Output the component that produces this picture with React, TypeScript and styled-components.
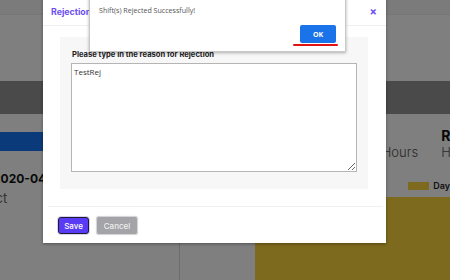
import React from 'react';
import styled, { createGlobalStyle } from 'styled-components';

const GlobalStyle = createGlobalStyle`
  html, body {
    margin: 0;
    padding: 0;
    width: 450px;
    height: 280px;
    overflow: hidden;
    background: #ffffff;
  }
`;

const Page = styled.div`
  position: relative;
  width: 450px;
  height: 280px;
  overflow: hidden;
  font-family: 'Inter', 'Liberation Sans', sans-serif;
  background: #ffffff;
`;

const TopBar = styled.div`
  height: 14px;
  background: #f6f6f6;
  border-bottom: 1px solid #ececec;
`;

const Hero = styled.div`
  height: 66px;
  background: #ffffff;
`;

const NavBar = styled.div`
  height: 33px;
  background: #949494;
`;

const Content = styled.div`
  display: grid;
  grid-template-columns: 180px 1fr;
  height: 166px;
`;

const LeftCol = styled.div`
  border-right: 1px solid #d8d8d8;
  padding-top: 18px;
  overflow: hidden;
`;

const BlueStrip = styled.div`
  height: 19px;
  background: #1474f2;
`;

const DateText = styled.div`
  margin: 20px 0 0 -7px;
  font-size: 12px;
  font-weight: 700;
  color: #111;
  white-space: nowrap;
`;

const SubText = styled.div`
  margin: 4px 0 0 -36px;
  font-size: 13px;
  color: #666;
  white-space: nowrap;
`;

const RightCol = styled.div`
  display: flex;
  flex-direction: column;
  overflow: hidden;
`;

const StatRow = styled.div`
  display: flex;
  gap: 23px;
  padding: 14px 0 0 169px;
`;

const Stat = styled.div`
  display: flex;
  flex-direction: column;
  white-space: nowrap;
`;

const StatTitle = styled.div`
  font-size: 14px;
  font-weight: 700;
  color: #111;
  line-height: 16px;
`;

const StatLabel = styled.div`
  font-size: 13px;
  font-weight: 300;
  color: #555;
  line-height: 16px;
`;

const Legend = styled.div`
  display: flex;
  align-items: center;
  gap: 4px;
  padding: 20px 0 0 228px;
  font-size: 9px;
  font-weight: 600;
  color: #222;
`;

const LegendSwatch = styled.span`
  width: 23px;
  height: 8px;
  background: #fcd43c;
`;

const Chart = styled.div`
  flex: 1;
  margin: 6px 0 0 75px;
  background: #fcd43c;
`;

const Overlay = styled.div`
  position: absolute;
  inset: 0;
  background: rgba(0, 0, 0, 0.5);
`;

const Modal = styled.div`
  position: absolute;
  left: 43px;
  top: -2px;
  width: 343px;
  height: 245px;
  background: #ffffff;
  box-shadow: 0 1px 3px rgba(0, 0, 0, 0.35);
  display: flex;
  flex-direction: column;
  font-family: 'Inter', 'Liberation Sans', sans-serif;
`;

const ModalHeader = styled.div`
  height: 27px;
  flex-shrink: 0;
  display: flex;
  align-items: center;
  justify-content: space-between;
  padding: 0 9px 0 8px;
  border-bottom: 1px solid #f0f0f0;
  color: #6b4df2;
`;

const ModalTitle = styled.span`
  font-size: 8.8px;
  font-weight: 700;
`;

const CloseX = styled.span`
  font-size: 11px;
  font-weight: 700;
  line-height: 1;
`;

const ModalBody = styled.div`
  padding: 11px 18px 17px 17px;
`;

const Panel = styled.div`
  background: #f7f7f7;
  padding: 13px 11px 17px 11px;
  display: flex;
  flex-direction: column;
`;

const FieldLabel = styled.label`
  font-size: 7.6px;
  font-weight: 700;
  line-height: 9px;
  color: #222;
  margin: 0 0 4px 1px;
`;

const ReasonInput = styled.textarea`
  box-sizing: border-box;
  display: block;
  width: 286px;
  height: 109px;
  border: 1px solid #b5b5b5;
  background: #ffffff;
  padding: 2px 2px;
  font-family: 'Open Sans', 'Liberation Sans', sans-serif;
  font-size: 8px;
  color: #333;
  outline: none;
`;

const ModalFooter = styled.div`
  margin: 0 3px 0 5px;
  border-top: 1px solid #f0f0f0;
  padding: 9px 10px;
  display: flex;
  align-items: center;
  gap: 7px;
`;

const FooterButton = styled.button<{ $variant: 'primary' | 'muted' }>`
  box-sizing: border-box;
  height: ${(p) => (p.$variant === 'primary' ? '17px' : '19px')};
  padding: 0 ${(p) => (p.$variant === 'primary' ? '5px' : '6px')};
  min-width: ${(p) => (p.$variant === 'primary' ? '31px' : '42px')};
  border-radius: 3px;
  font-family: 'Inter', 'Liberation Sans', sans-serif;
  font-size: 8px;
  font-weight: 500;
  color: ${(p) => (p.$variant === 'primary' ? '#ffffff' : '#eeeeee')};
  background: ${(p) => (p.$variant === 'primary' ? '#5a3bf5' : '#a3a3a8')};
  border: 1px solid ${(p) => (p.$variant === 'primary' ? '#1e1b2e' : '#d6d6d6')};
  box-shadow: ${(p) =>
    p.$variant === 'primary' ? '0 0 0 1px #d8d4f0' : '0 0 1px rgba(0,0,0,0.2)'};
`;

const AlertBox = styled.div`
  position: absolute;
  left: 89px;
  top: -4px;
  width: 257px;
  height: 56px;
  background: #ffffff;
  border: 1px solid #c8c8c8;
  border-top: none;
  box-shadow: 0 1px 3px rgba(0, 0, 0, 0.3);
  box-sizing: border-box;
  padding: 9px 9px 0 9px;
  display: flex;
  flex-direction: column;
  font-family: 'Open Sans', 'Liberation Sans', sans-serif;
`;

const AlertText = styled.div`
  font-size: 7.1px;
  line-height: 10px;
  color: #555;
`;

const AlertActions = styled.div`
  display: flex;
  justify-content: flex-end;
  margin-top: 10px;
`;

const OkWrap = styled.div`
  position: relative;
  &::after {
    content: '';
    position: absolute;
    left: -7px;
    right: -2px;
    bottom: -3px;
    height: 2px;
    border-radius: 1px;
    background: #e01414;
  }
`;

const OkButton = styled.button`
  display: block;
  width: 36px;
  height: 18px;
  border: none;
  border-radius: 2px;
  background: #1a73e8;
  color: #ffffff;
  font-family: 'Open Sans', 'Liberation Sans', sans-serif;
  font-size: 7px;
  font-weight: 700;
  padding: 0;
`;

const App: React.FC = () => {
  return (
    <>
      <GlobalStyle />
      <Page>
        <TopBar />
        <Hero />
        <NavBar />
        <Content>
          <LeftCol>
            <BlueStrip />
            <DateText>2020-04-12</DateText>
            <SubText>Project</SubText>
          </LeftCol>
          <RightCol>
            <StatRow>
              <Stat>
                <StatTitle>Total</StatTitle>
                <StatLabel>Total Hours</StatLabel>
              </Stat>
              <Stat>
                <StatTitle>Rejected</StatTitle>
                <StatLabel>Hours</StatLabel>
              </Stat>
            </StatRow>
            <Legend>
              <LegendSwatch />
              Day
            </Legend>
            <Chart />
          </RightCol>
        </Content>
        <Overlay />
        <Modal>
          <ModalHeader>
            <ModalTitle>Rejection</ModalTitle>
            <CloseX>×</CloseX>
          </ModalHeader>
          <ModalBody>
            <Panel>
              <FieldLabel>Please type in the reason for Rejection</FieldLabel>
              <ReasonInput defaultValue="TestRej" />
            </Panel>
          </ModalBody>
          <ModalFooter>
            <FooterButton $variant="primary">Save</FooterButton>
            <FooterButton $variant="muted">Cancel</FooterButton>
          </ModalFooter>
        </Modal>
        <AlertBox>
          <AlertText>Shift(s) Rejected Successfully!</AlertText>
          <AlertActions>
            <OkWrap>
              <OkButton>OK</OkButton>
            </OkWrap>
          </AlertActions>
        </AlertBox>
      </Page>
    </>
  );
};

export default App;
